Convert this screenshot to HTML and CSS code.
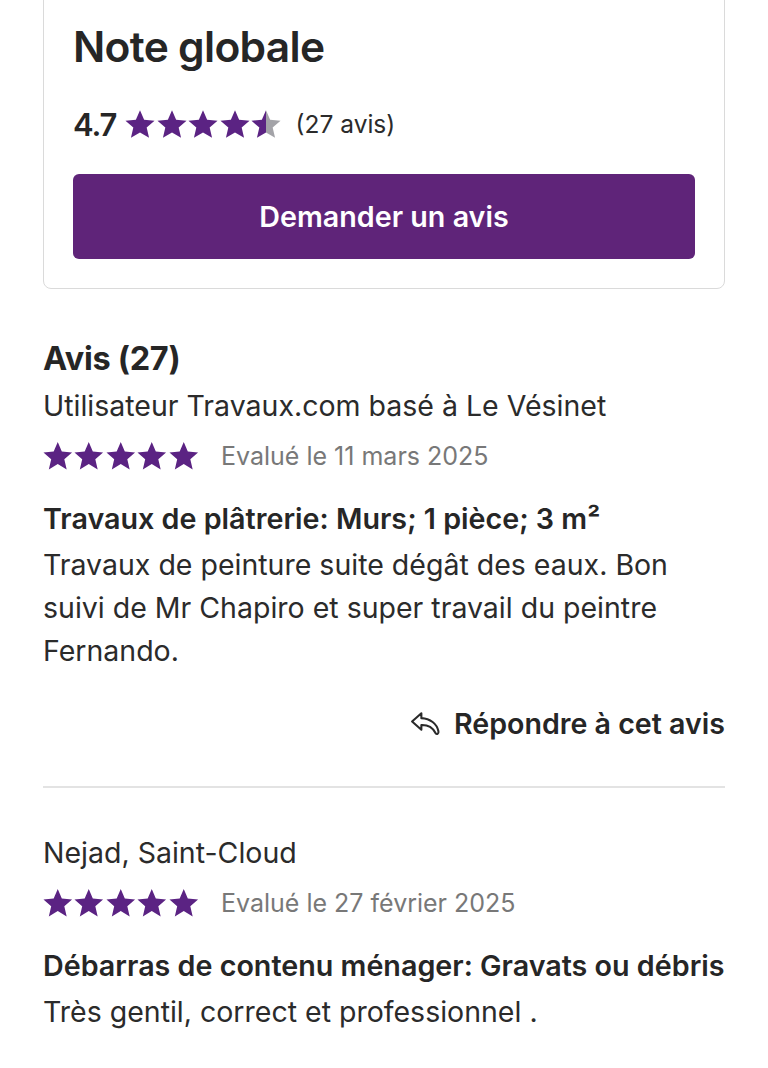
FILE: index.html
```html
<!DOCTYPE html>
<html lang="fr">
<head>
<meta charset="utf-8">
<link rel="stylesheet" href="styles.css">
</head>
<body>
<svg width="0" height="0" class="defs">
  <defs>
    <symbol id="star" viewBox="0 0 24 24"><path d="M12 1.6l3.1 7.2 7.8.7-5.9 5.2 1.8 7.7L12 18.3l-6.8 4.1 1.8-7.7-5.9-5.2 7.8-.7z"/></symbol>
    <linearGradient id="half" x1="0" x2="1" y1="0" y2="0">
      <stop offset="50%" stop-color="#5b2383"/>
      <stop offset="50%" stop-color="#a3a3a8"/>
    </linearGradient>
  </defs>
</svg>
<main class="page">
  <section class="card">
    <h1 class="card-title">Note globale</h1>
    <div class="score-row">
      <span class="score">4.7</span>
      <span class="stars stars-lg">
        <svg class="star"><use href="#star"/></svg>
        <svg class="star"><use href="#star"/></svg>
        <svg class="star"><use href="#star"/></svg>
        <svg class="star"><use href="#star"/></svg>
        <svg class="star star-half" viewBox="0 0 24 24"><path fill="url(#half)" d="M12 1.6l3.1 7.2 7.8.7-5.9 5.2 1.8 7.7L12 18.3l-6.8 4.1 1.8-7.7-5.9-5.2 7.8-.7z"/></svg>
      </span>
      <span class="count">(27 avis)</span>
    </div>
    <button class="btn">Demander un avis</button>
  </section>

  <h2 class="section-title">Avis (27)</h2>

  <article class="review">
    <div class="author">Utilisateur Travaux.com basé à Le Vésinet</div>
    <div class="rating-row">
      <span class="stars">
        <svg class="star"><use href="#star"/></svg>
        <svg class="star"><use href="#star"/></svg>
        <svg class="star"><use href="#star"/></svg>
        <svg class="star"><use href="#star"/></svg>
        <svg class="star"><use href="#star"/></svg>
      </span>
      <span class="date">Evalué le 11 mars 2025</span>
    </div>
    <h3 class="job">Travaux de plâtrerie: Murs; 1 pièce; 3 m²</h3>
    <p class="text">Travaux de peinture suite dégât des eaux. Bon suivi de Mr Chapiro et super travail du peintre Fernando.</p>
    <div class="reply-row">
      <a class="reply">
        <svg class="reply-icon" viewBox="0 0 30 26"><path d="M11 3 L2 11 L11 19 V14.5 C17 14.3 21.5 16 24.5 22 C26 24 28 23 27.5 20.5 C26 13 19.5 8.3 11 7.8 Z" fill="none" stroke="#2a2a2a" stroke-width="2" stroke-linejoin="round"/></svg>
        <span>Répondre à cet avis</span>
      </a>
    </div>
  </article>

  <hr class="divider">

  <article class="review">
    <div class="author">Nejad, Saint-Cloud</div>
    <div class="rating-row">
      <span class="stars">
        <svg class="star"><use href="#star"/></svg>
        <svg class="star"><use href="#star"/></svg>
        <svg class="star"><use href="#star"/></svg>
        <svg class="star"><use href="#star"/></svg>
        <svg class="star"><use href="#star"/></svg>
      </span>
      <span class="date">Evalué le 27 février 2025</span>
    </div>
    <h3 class="job">Débarras de contenu ménager: Gravats ou débris</h3>
    <p class="text">Très gentil, correct et professionnel .</p>
  </article>
</main>
</body>
</html>
```

FILE: styles.css
```css
* { box-sizing: border-box; }
html, body { margin: 0; padding: 0; background: #fff; }
body {
  font-family: Inter, "Noto Sans", "Liberation Sans", sans-serif;
  color: #2b2b2b;
  overflow: hidden;
}
.defs { position: absolute; }
.page {
  padding: 0 43px;
}
.card {
  margin-top: -20px;
  border: 1.5px solid #dadada;
  border-radius: 8px;
  padding: 38px 29px 29px 29px;
}
.card-title {
  margin: 0;
  font-size: 42.5px;
  font-weight: 600;
  letter-spacing: -0.7px;
  line-height: 56px;
  color: #262626;
}
.score-row {
  display: flex;
  align-items: center;
  margin-top: 29px;
  height: 40px;
}
.score {
  font-size: 31px;
  font-weight: 600;
  letter-spacing: -1.2px;
  color: #262626;
}
.stars {
  display: inline-flex;
  fill: #5b2383;
}
.star { width: 32px; height: 32px; display: block; }
.stars-lg { margin-left: 8px; }
.stars-lg .star { width: 32px; height: 32px; margin-right: -0.5px; }
.count {
  margin-left: 14px;
  font-size: 24.5px;
  color: #2b2b2b;
}
.btn {
  display: block;
  width: 100%;
  margin-top: 30px;
  height: 85px;
  border: none;
  border-radius: 6px;
  background: #5f2479;
  color: #fff;
  font-family: inherit;
  font-size: 28.7px;
  font-weight: 600;
}
.section-title {
  margin: 50px 0 0 0;
  font-size: 32.5px;
  font-weight: 700;
  line-height: 40px;
  letter-spacing: -0.3px;
  color: #262626;
}
.author {
  font-size: 28.5px;
  line-height: 40px;
  margin-top: 7px;
}
.rating-row {
  display: flex;
  align-items: center;
  margin-top: 10px;
  height: 40px;
}
.rating-row .stars { margin-left: -1.5px; }
.rating-row .star { width: 31.5px; height: 31.5px; }
.date {
  margin-left: 22px;
  font-size: 25px;
  color: #787878;
}
.job {
  margin: 23px 0 0 0;
  font-size: 28.7px;
  font-weight: 600;
  line-height: 40px;
  color: #262626;
}
.text {
  margin: 4px 0 0 0;
  font-size: 28.5px;
  line-height: 43px;
}
.reply-row {
  display: flex;
  justify-content: flex-end;
  margin-top: 34px;
}
.reply {
  display: inline-flex;
  align-items: center;
  gap: 13px;
  font-size: 28.6px;
  font-weight: 600;
  color: #262626;
}
.reply-icon { width: 31px; height: 27px; }
.divider {
  border: none;
  border-top: 2px solid #e3e3e3;
  margin: 45px 0 0 0;
}
.divider + .review .author { margin-top: 45px; }
```
